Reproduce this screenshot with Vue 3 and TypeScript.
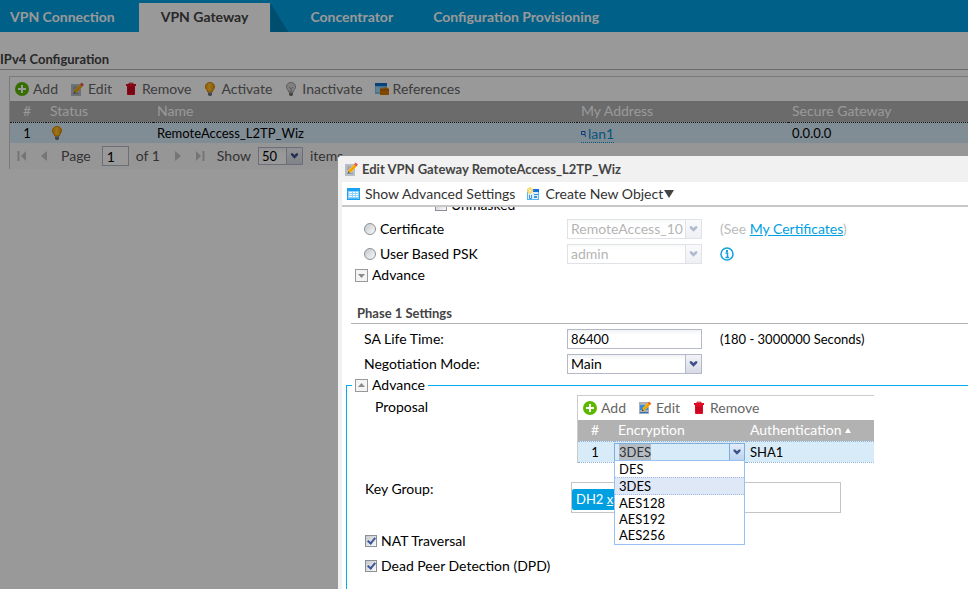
<script setup lang="ts">
import { onMounted, ref } from 'vue'

const tabs = ['VPN Connection', 'VPN Gateway', 'Concentrator', 'Configuration Provisioning']
const activeTab = ref('VPN Gateway')

interface Action {
  label: string
  icon: string
}
const gatewayActions: Action[] = [
  { label: 'Add', icon: 'add' },
  { label: 'Edit', icon: 'edit' },
  { label: 'Remove', icon: 'remove' },
  { label: 'Activate', icon: 'bulb-on' },
  { label: 'Inactivate', icon: 'bulb-off' },
  { label: 'References', icon: 'refs' },
]
const proposalActions: Action[] = [
  { label: 'Add', icon: 'add' },
  { label: 'Edit', icon: 'edit-row' },
  { label: 'Remove', icon: 'remove' },
]

const page = ref('1')
const pageSize = ref('50')
const authMethod = ref('')
const unmasked = ref(false)
const lifeTime = ref('86400')
const mode = ref('Main')
const nat = ref(true)
const dpd = ref(true)
const encryptions = ['DES', '3DES', 'AES128', 'AES192', 'AES256']
const encryption = ref('3DES')
const listOpen = ref(true)
const encryptionInput = ref<HTMLInputElement | null>(null)

function choose(value: string) {
  encryption.value = value
  listOpen.value = false
}

onMounted(() => {
  encryptionInput.value?.focus({ preventScroll: true })
  encryptionInput.value?.select()
})
</script>

<template>
  <svg class="sprite" aria-hidden="true">
    <defs>
      <linearGradient id="bulbFill" x1="0" x2="1">
        <stop offset="0" stop-color="#f39a00" />
        <stop offset="0.45" stop-color="#ffc42e" />
        <stop offset="1" stop-color="#f08c00" />
      </linearGradient>
      <symbol id="add" viewBox="0 0 14 14">
        <circle cx="7" cy="7" r="7" fill="#5cb800" />
        <path d="M7 3v8M3 7h8" stroke="#fff" stroke-width="2" />
      </symbol>
      <symbol id="edit" viewBox="0 0 14 14">
        <rect x="1" y="2" width="10" height="12" fill="#b9bec4" />
        <path d="M3 5h4M3 7h3M3 11.500h6" stroke="#8d959d" />
        <path d="M4 11l.8-3.200L10.500 2l2.300 2.200-5.700 5.900z" fill="#ffb400" />
        <path d="M5.800 9.500l5.900-6" stroke="#e58a00" />
        <path d="M10 2.300L11.700.6l2.200 2.100-1.600 1.800z" fill="#e2555d" />
        <path d="M4 11l.5-1.800 1.300 1.200z" fill="#333" />
      </symbol>
      <symbol id="edit-row" viewBox="0 0 14 14">
        <rect x="1" y="1" width="10" height="12" fill="#a9b0b8" />
        <rect x="2" y="4" width="8" height="5" fill="#2f8fdc" />
        <path d="M2 11.500h8" stroke="#2f6fb0" />
        <path d="M4 10l.8-3.200L10 1.500l2.300 2.200-5.200 5.400z" fill="#ffb400" />
        <path d="M5.500 8.800l5.500-5.600" stroke="#e58a00" />
        <path d="M9.500 2L11.200.4l2.200 2.100-1.600 1.700z" fill="#e8702a" />
        <path d="M4 10l.5-1.800 1.300 1.200z" fill="#222" />
      </symbol>
      <symbol id="remove" viewBox="0 0 14 14">
        <path d="M5 2V1.200h4V2" fill="none" stroke="#d6001c" />
        <path d="M2 2h10v2h-10zM3 4h8v8q0 1-1 1h-6q-1 0-1-1z" fill="#df0a26" />
        <path d="M5 5.500v6M7 5.500v6M9 5.500v6" stroke="#b8001c" />
      </symbol>
      <symbol id="bulb-on" viewBox="0 0 14 14">
        <path d="M7 .5C4.300.500 2.500 2.300 2.500 4.800c0 2 1.700 2.800 2.200 5.200h4.600c.5-2.400 2.200-3.200 2.200-5.200C11.500 2.300 9.700.500 7 .5z" fill="url(#bulbFill)" stroke="#d08000" />
        <path d="M5 10.500h4v2.300L8 14H6l-1-1.200z" fill="#777" />
      </symbol>
      <symbol id="bulb-off" viewBox="0 0 14 14">
        <path d="M7 .5C4.300.500 2.500 2.300 2.500 4.800c0 2 1.700 2.800 2.200 5.200h4.600c.5-2.400 2.200-3.200 2.200-5.200C11.500 2.300 9.700.500 7 .5z" fill="#d8d8d8" stroke="#999" />
        <path d="M5 5l2 2 2-2M7 7v3" stroke="#999" fill="none" />
        <path d="M5 10.500h4v2.300L8 14H6l-1-1.200z" fill="#777" />
      </symbol>
      <symbol id="refs" viewBox="0 0 14 14">
        <rect x="0" y="1" width="12" height="11" fill="#7cc3ec" />
        <rect x="0" y="1" width="12" height="3" fill="#0d6fd0" />
        <path d="M2 5v5M4 5v5" stroke="#d6f0ff" />
        <path d="M5 6.500h3l1-1h3l1 1h1V13H5z" fill="#d97a00" />
        <path d="M5 8h9" stroke="#a85800" />
      </symbol>
      <symbol id="form" viewBox="0 0 14 14">
        <rect x="0.500" y="1.500" width="12" height="11" fill="#8fd2fb" stroke="#1ba1f2" />
        <rect x="0" y="1" width="13" height="3" fill="#1ba1f2" />
        <path d="M2 5.500h3M2 7.500h3M2 9.500h3M6 5.500h2M6 7.500h2M6 9.500h2M9 5.500h2M9 7.500h2M9 9.500h2" stroke="#fff" />
        <path d="M2 11.500h9" stroke="#4fb7f5" />
      </symbol>
      <symbol id="create" viewBox="0 0 14 14">
        <rect x="0.500" y="2.500" width="11" height="10" fill="#d9effd" stroke="#55b6ee" />
        <rect x="6" y="2" width="6" height="3" fill="#126fe0" />
        <path d="M2.500 8v3.500h2V8M7 7.500h4" fill="none" stroke="#3f93d8" />
        <rect x="7" y="9" width="3" height="2" fill="#3f93d8" />
        <circle cx="3" cy="3.500" r="3" fill="#fbe08a" />
        <path d="M3 0v7M0 3.500h6.500" stroke="#f8ce45" />
        <circle cx="3" cy="3.500" r="1" fill="#fffbe6" />
      </symbol>
    </defs>
  </svg>

  <div class="page">
    <nav class="tabs">
      <a
        v-for="t in tabs"
        :key="t"
        href="#"
        class="tab"
        :class="{ active: t === activeTab }"
        @click.prevent="activeTab = t"
        >{{ t }}</a
      >
    </nav>

    <h2 class="section-title">IPv4 Configuration</h2>

    <section class="panel">
      <div class="toolbar">
        <button v-for="a in gatewayActions" :key="a.label" type="button" class="tool">
          <svg class="icon"><use :href="'#' + a.icon" /></svg>{{ a.label }}
        </button>
      </div>
      <table class="grid gateways">
        <thead>
          <tr>
            <th class="num">#</th>
            <th class="c-status">Status</th>
            <th class="c-name">Name</th>
            <th class="c-addr">My Address</th>
            <th>Secure Gateway</th>
          </tr>
        </thead>
        <tbody>
          <tr>
            <td class="num">1</td>
            <td><svg class="icon"><use href="#bulb-on" /></svg></td>
            <td>RemoteAccess_L2TP_Wiz</td>
            <td>
              <a href="#" class="address">
                <svg viewBox="0 0 5 6" class="mini"><path d="M.5.500h3.500v3h-3.500zM4 4l1 2" fill="none" stroke="#0a5bd0" /></svg>lan1
              </a>
            </td>
            <td>0.0.0.0</td>
          </tr>
        </tbody>
      </table>
      <div class="pager">
        <button type="button" class="page-button" aria-label="First page">
          <svg viewBox="0 0 10 12"><path d="M1.500 1v10" stroke="#c4c4c4" stroke-width="2" /><path d="M9 1v10L4 6z" fill="#c4c4c4" /></svg>
        </button>
        <button type="button" class="page-button" aria-label="Previous page">
          <svg viewBox="0 0 10 12"><path d="M8 1v10L2 6z" fill="#c4c4c4" /></svg>
        </button>
        <label class="page-label">Page <input v-model="page" class="page-input" type="text" /></label>
        <span>of 1</span>
        <button type="button" class="page-button next" aria-label="Next page">
          <svg viewBox="0 0 10 12"><path d="M2 1v10l6-5z" fill="#c4c4c4" /></svg>
        </button>
        <button type="button" class="page-button" aria-label="Last page">
          <svg viewBox="0 0 10 12"><path d="M8.500 1v10" stroke="#c4c4c4" stroke-width="2" /><path d="M1 1v10l5-5z" fill="#c4c4c4" /></svg>
        </button>
        <label class="page-label" for="page-size">Show</label>
        <span class="combo size-combo">
          <select id="page-size" v-model="pageSize"><option>50</option></select>
          <svg class="arrow" viewBox="0 0 16 18"><path d="M4 6h2l2 2 2-2h2v2l-4 4-4-4z" /></svg>
        </span>
        <span>items</span>
      </div>
    </section>
  </div>

  <div class="backdrop"></div>

  <div class="dialog" role="dialog" aria-labelledby="dialog-title">
    <header class="dialog-header">
      <svg class="icon"><use href="#edit" /></svg>
      <h1 id="dialog-title">Edit VPN Gateway RemoteAccess_L2TP_Wiz</h1>
    </header>
    <div class="dialog-tools">
      <button type="button" class="tool">
        <svg class="icon"><use href="#form" /></svg>Show Advanced Settings
      </button>
      <button type="button" class="tool">
        <svg class="icon"><use href="#create" /></svg>Create New Object<svg class="caret" viewBox="0 0 10 8"><path d="M0 0h10L5 8z" /></svg>
      </button>
    </div>

    <form class="dialog-body" @submit.prevent>
      <div class="row unmasked">
        <label class="check"><input v-model="unmasked" type="checkbox" />Unmasked</label>
      </div>
      <div class="row">
        <label class="check name"><input v-model="authMethod" type="radio" name="auth" value="cert" />Certificate</label>
        <span class="combo disabled">
          <select disabled aria-label="Certificate"><option>RemoteAccess_10</option></select>
          <svg class="arrow" viewBox="0 0 16 18"><path d="M4 6h2l2 2 2-2h2v2l-4 4-4-4z" /></svg>
        </span>
        <span class="note muted">(See <a href="#">My Certificates</a>)</span>
      </div>
      <div class="row">
        <label class="check name"><input v-model="authMethod" type="radio" name="auth" value="psk" />User Based PSK</label>
        <span class="combo disabled">
          <select disabled aria-label="User"><option>admin</option></select>
          <svg class="arrow" viewBox="0 0 16 18"><path d="M4 6h2l2 2 2-2h2v2l-4 4-4-4z" /></svg>
        </span>
        <svg class="info" viewBox="0 0 14 14">
          <circle cx="7" cy="7" r="6" fill="none" stroke="#12a0de" stroke-width="1.500" />
          <path d="M5.500 6h2v4.500M5.500 10.500h3.500" fill="none" stroke="#12a0de" stroke-width="1.500" />
          <rect x="6" y="3" width="2" height="2" fill="#12a0de" />
        </svg>
      </div>
      <button type="button" class="toggle">
        <svg viewBox="0 0 13 13"><rect x=".5" y=".5" width="12" height="12" /><path d="M3 5h7L6.500 9z" /></svg>Advance
      </button>

      <h3>Phase 1 Settings</h3>
      <div class="row">
        <label class="name" for="life">SA Life Time:</label>
        <input id="life" v-model="lifeTime" class="field" type="text" />
        <span class="note range">(180 - 3000000 Seconds)</span>
      </div>
      <div class="row">
        <label class="name" for="mode">Negotiation Mode:</label>
        <span class="combo">
          <select id="mode" v-model="mode"><option>Main</option></select>
          <svg class="arrow" viewBox="0 0 16 18"><path d="M4 6h2l2 2 2-2h2v2l-4 4-4-4z" /></svg>
        </span>
      </div>

      <fieldset>
        <legend>
          <button type="button" class="toggle">
            <svg viewBox="0 0 13 13"><rect x=".5" y=".5" width="12" height="12" /><path d="M3 8h7L6.500 4z" /></svg>Advance
          </button>
        </legend>
        <div class="line">
          <span class="line-name indent">Proposal</span>
          <div class="panel proposals">
            <div class="toolbar">
              <button v-for="a in proposalActions" :key="a.label" type="button" class="tool">
                <svg class="icon"><use :href="'#' + a.icon" /></svg>{{ a.label }}
              </button>
            </div>
            <table class="grid">
              <thead>
                <tr>
                  <th class="num">#</th>
                  <th class="c-enc">Encryption</th>
                  <th>Authentication <svg class="sort" viewBox="0 0 6 5"><path d="M0 5h6L3 0z" /></svg></th>
                </tr>
              </thead>
              <tbody>
                <tr>
                  <td class="num">1</td>
                  <td class="editor-cell">
                    <div class="editor">
                      <input
                        ref="encryptionInput"
                        v-model="encryption"
                        type="text"
                        role="combobox"
                        aria-label="Encryption"
                        aria-controls="encryption-list"
                        :aria-expanded="listOpen"
                      />
                      <button type="button" aria-label="Open list" @click="listOpen = !listOpen">
                        <svg viewBox="0 0 16 18"><path d="M4 6h2l2 2 2-2h2v2l-4 4-4-4z" /></svg>
                      </button>
                      <ul v-if="listOpen" id="encryption-list" class="options" role="listbox">
                        <li
                          v-for="e in encryptions"
                          :key="e"
                          role="option"
                          :aria-selected="e === encryption"
                          :class="{ selected: e === encryption }"
                          @click="choose(e)"
                        >
                          {{ e }}
                        </li>
                      </ul>
                    </div>
                  </td>
                  <td>SHA1</td>
                </tr>
              </tbody>
            </table>
          </div>
        </div>
        <div class="line key-line">
          <span class="line-name">Key Group:</span>
          <div class="tags">
            <span class="tag">DH2 <a href="#" aria-label="Remove DH2">x</a></span>
          </div>
        </div>
        <label class="check"><input v-model="nat" type="checkbox" />NAT Traversal</label>
        <label class="check"><input v-model="dpd" type="checkbox" />Dead Peer Detection (DPD)</label>
      </fieldset>
    </form>
  </div>
</template>

<style>
body {
  margin: 0;
  overflow: hidden;
  background: #fff;
}
</style>

<style scoped>
.page,
.dialog {
  font-family: 'Century Gothic', Lato, sans-serif;
  font-size: 14px;
  line-height: 18px;
  color: #000;
}
.page *,
.dialog * {
  box-sizing: border-box;
}
.sprite {
  position: absolute;
  width: 0;
  height: 0;
}
button,
input,
select {
  margin: 0;
  padding: 0;
  font: inherit;
  color: inherit;
}
button {
  border: 0;
  background: none;
  cursor: pointer;
}
.icon {
  flex: none;
  display: block;
  width: 14px;
  height: 14px;
}

/* Tab bar */
.tabs {
  display: flex;
  align-items: flex-end;
  height: 32px;
  padding-left: 10px;
  background: #00a0e2;
}
.tab {
  height: 29px;
  line-height: 28px;
  margin-right: 40px;
  color: #fff;
  font-weight: bold;
  text-decoration: none;
  white-space: nowrap;
}
.tab:first-child {
  margin-right: 24px;
}
.tab.active {
  position: relative;
  padding: 0 22px;
  background: #fff;
  color: #444;
}
.tab.active::after {
  content: '';
  position: absolute;
  left: 100%;
  top: 0;
  width: 18px;
  height: 29px;
  background: #0083b9;
  clip-path: polygon(0 0, 100% 100%, 0 100%);
}
.section-title {
  margin: 18px 0 6px;
  border-bottom: 1px solid #b2b2b2;
  font-size: 13px;
  line-height: 19px;
  color: #444;
}

/* Tables */
.panel {
  margin-left: 9px;
  border: 1px solid #cbcbcb;
  border-width: 1px 0 0 1px;
}
.toolbar {
  display: flex;
  align-items: center;
  gap: 12px;
  height: 24px;
  padding-left: 5px;
}
.tool {
  display: flex;
  align-items: center;
  gap: 4px;
  color: #666;
  white-space: nowrap;
}
.grid {
  width: 100%;
  table-layout: fixed;
  border-collapse: collapse;
}
.grid th {
  height: 21px;
  padding: 0 4px;
  background: #b2b2b2;
  color: #fff;
  font-weight: normal;
  text-align: left;
}
.grid td {
  height: 21px;
  padding: 0 4px;
  background: #d8ebf9;
  border-top: 1px dotted #8fb2da;
  font-size: 13px;
}
.gateways td {
  border-top-color: #222;
}
.grid .num {
  width: 36px;
  padding: 0 2px 0 0;
  text-align: center;
}
.c-status {
  width: 107px;
}
.c-name {
  width: 424px;
}
.c-addr {
  width: 211px;
}
.c-enc {
  width: 132px;
}
.address {
  display: inline-flex;
  align-items: center;
  gap: 2px;
  height: 17px;
  border-bottom: 1px dotted #0a8fd0;
  color: #0a8fd0;
  font-size: 14px;
  text-decoration: none;
}
.mini {
  width: 5px;
  height: 6px;
}
.sort {
  width: 6px;
  height: 5px;
  margin-bottom: 2px;
  fill: #fff;
}

/* Pager */
.pager {
  display: flex;
  align-items: center;
  gap: 7px;
  height: 26px;
  padding-left: 7px;
  background: #fafafa;
  color: #555;
}
.page-button {
  display: flex;
  width: 12px;
  margin-right: 3px;
}
.page-button svg {
  width: 10px;
  height: 12px;
}
.page-button.next {
  margin-left: 6px;
}
.page-label {
  display: flex;
  align-items: center;
  gap: 11px;
}
.page-input {
  width: 27px;
  height: 20px;
  padding-left: 4px;
  border: 1px solid #b5b8c8;
  color: #000;
}

/* Combo boxes */
.combo {
  display: flex;
  flex: none;
  width: 135px;
  height: 20px;
  border: 1px solid #b5b8c8;
  background: #fff linear-gradient(#f0f3f4, #fff 5px);
}
.combo select {
  flex: 1;
  min-width: 0;
  padding-left: 3px;
  border: 0;
  background: transparent;
  color: #000;
  appearance: none;
  line-height: 17px;
  opacity: 1;
}
.arrow {
  flex: none;
  width: 16px;
  height: 18px;
  border-left: 1px solid #b5b8c8;
  background: linear-gradient(#f2f4f8, #d5dae4);
  fill: #3c5388;
  pointer-events: none;
}
.size-combo {
  width: 45px;
  height: 18px;
}
.size-combo select {
  font-size: 13px;
}
.size-combo .arrow {
  height: 16px;
}
.disabled {
  opacity: 0.4;
}
.disabled select {
  color: #444;
}

/* Dialog */
.backdrop {
  position: fixed;
  inset: 0;
  background: rgba(0, 0, 0, 0.4);
}
.dialog {
  position: fixed;
  left: 338px;
  top: 156px;
  right: 0;
  bottom: 0;
  display: flex;
  flex-direction: column;
  overflow: hidden;
  border-left: 4px solid #f1f1f1;
  border-top-left-radius: 3px;
  background: #fff;
}
.dialog-header {
  display: flex;
  align-items: center;
  gap: 4px;
  height: 26px;
  padding-left: 2px;
  background: #f1f1f1;
}
h1 {
  margin: 0;
  font-size: 13px;
  color: #444;
}
.dialog-tools {
  display: flex;
  align-items: center;
  gap: 12px;
  flex: none;
  height: 25px;
  padding-left: 5px;
  border-bottom: 2px solid #c8c8c8;
}
.dialog-tools .tool {
  color: #333;
}
.caret {
  width: 10px;
  height: 8px;
  margin-left: -3px;
  fill: #444;
}
.dialog-body {
  flex: 1;
  overflow: hidden;
}
.row {
  display: flex;
  align-items: center;
  height: 25px;
  padding-left: 22px;
  white-space: nowrap;
}
.row.unmasked {
  height: 22px;
  margin-top: -13px;
  padding-left: 93px;
}
.name {
  flex: none;
  width: 203px;
}
.note {
  margin-left: 18px;
}
.range {
  font-size: 13px;
}
.muted {
  color: #bbb;
}
.muted a {
  color: #009fe3;
}
.info {
  width: 14px;
  height: 14px;
  margin-left: 18px;
}
.field {
  width: 135px;
  height: 20px;
  padding: 0 3px;
  border: 1px solid #b5b8c8;
  background: #fff linear-gradient(#f0f3f4, #fff 5px);
  font-size: 13px;
}
.check {
  display: flex;
  align-items: center;
  gap: 4px;
  height: 25px;
}
.check input {
  appearance: none;
  flex: none;
  width: 12px;
  height: 12px;
  border: 1px solid #8a8f98;
  background: linear-gradient(135deg, #c4c8cc, #fafafa);
}
.check input[type='radio'] {
  border-radius: 50%;
}
.check input[type='checkbox']:checked::after {
  content: '';
  display: block;
  width: 3px;
  height: 6px;
  margin: 0 auto;
  border: solid #3f5798;
  border-width: 0 2px 2px 0;
  box-sizing: content-box;
  transform: rotate(40deg);
}
.toggle {
  display: flex;
  align-items: center;
  gap: 4px;
  height: 18px;
}
.toggle svg {
  width: 13px;
  height: 13px;
  fill: #8a8a8a;
}
.toggle rect {
  fill: #f4f4f4;
  stroke: #999;
}
.dialog-body > .toggle {
  margin-left: 13px;
}
h3 {
  margin: 20px 0 2px 9px;
  padding-left: 6px;
  border-bottom: 1px solid #b2b2b2;
  font-size: 13px;
  line-height: 19px;
  color: #444;
}

/* Advanced block */
fieldset {
  min-width: 0;
  height: 240px;
  margin: 0 0 0 4px;
  padding: 1px 0 0 18px;
  border: solid #00aeef;
  border-width: 1px 0 0 1px;
}
legend {
  margin-left: -13px;
  padding: 0 3px;
}
.line {
  display: flex;
}
.line-name {
  flex: none;
  width: 206px;
  line-height: 24px;
}
.indent {
  padding-left: 10px;
}
.proposals {
  width: 297px;
  margin-left: 6px;
}
.proposals .grid {
  border-bottom: 1px dotted #8fb2da;
}
.key-line {
  margin-top: 19px;
  margin-bottom: 16px;
}
.key-line .line-name {
  line-height: 14px;
}
.tags {
  display: flex;
  align-items: center;
  width: 270px;
  height: 31px;
  border: 1px solid #c4c4c4;
}
.tag {
  height: 21px;
  margin-top: 4px;
  padding: 0 4px;
  border-radius: 2px;
  background: #009fe1;
  color: #fff;
  font-size: 13px;
  line-height: 20px;
}
.tag a {
  color: #fff;
}
.grid .editor-cell {
  padding: 0 1px 0 0;
}
.editor {
  position: relative;
  display: flex;
  height: 18px;
  border: 1px solid #7eadd9;
}
.editor input {
  flex: 1;
  min-width: 0;
  padding-left: 4px;
  border: 0;
  outline: 0;
  background: transparent;
  color: #333;
}
.editor input::selection {
  background: #b4bcc4;
  color: #333;
}
.editor button {
  display: flex;
  width: 15px;
  border-left: 1px solid #7eadd9;
  background: linear-gradient(#e3edfb, #bdd3f0);
}
.editor svg {
  width: 14px;
  height: 16px;
  fill: #3c5388;
}
.options {
  position: absolute;
  z-index: 1;
  left: -1px;
  right: -1px;
  top: 16px;
  margin: 0;
  padding: 0 0 1px;
  border: 1px solid #98c0f4;
  background: #fff;
  list-style: none;
}
.options li {
  padding-left: 4px;
  line-height: 16px;
}
.options .selected {
  border: 1px dotted #a3bae9;
  border-width: 1px 0;
  background: #dfe8f6;
}
</style>
